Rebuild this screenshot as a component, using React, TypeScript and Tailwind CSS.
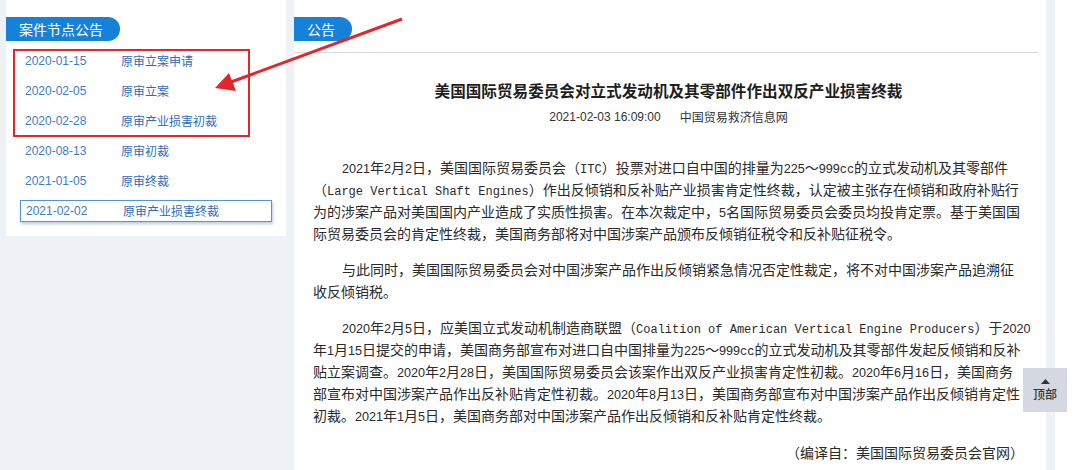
import React from "react";

// case timeline entries shown in the left sidebar
const nodes = [
  { date: "2020-01-15", title: "原审立案申请" },
  { date: "2020-02-05", title: "原审立案" },
  { date: "2020-02-28", title: "原审产业损害初裁" },
  { date: "2020-08-13", title: "原审初裁" },
  { date: "2021-01-05", title: "原审终裁" },
];

// body text, broken into the same lines as the original page
const paragraphs = [
  [
    "2021年2月2日，美国国际贸易委员会（ITC）投票对进口自中国的排量为225～999cc的立式发动机及其零部件",
    "（Large Vertical Shaft Engines）作出反倾销和反补贴产业损害肯定性终裁，认定被主张存在倾销和政府补贴行",
    "为的涉案产品对美国国内产业造成了实质性损害。在本次裁定中，5名国际贸易委员会委员均投肯定票。基于美国国",
    "际贸易委员会的肯定性终裁，美国商务部将对中国涉案产品颁布反倾销征税令和反补贴征税令。",
  ],
  [
    "与此同时，美国国际贸易委员会对中国涉案产品作出反倾销紧急情况否定性裁定，将不对中国涉案产品追溯征",
    "收反倾销税。",
  ],
  [
    "2020年2月5日，应美国立式发动机制造商联盟（Coalition of American Vertical Engine Producers）于2020",
    "年1月15日提交的申请，美国商务部宣布对进口自中国排量为225～999cc的立式发动机及其零部件发起反倾销和反补",
    "贴立案调查。2020年2月28日，美国国际贸易委员会该案作出双反产业损害肯定性初裁。2020年6月16日，美国商务",
    "部宣布对中国涉案产品作出反补贴肯定性初裁。2020年8月13日，美国商务部宣布对中国涉案产品作出反倾销肯定性",
    "初裁。2021年1月5日，美国商务部对中国涉案产品作出反倾销和反补贴肯定性终裁。",
  ],
];

// half-width runs get narrower latin fonts so the lines keep their widths
function Mixed({ text }: { text: string }) {
  return (
    <>
      {text.split(/([0-9]+|[A-Za-z ]+)/).map((p, i) => {
        if (!p) return null;
        if (/^[0-9]+$/.test(p))
          return (
            <span key={i} className="font-['Liberation_Sans',sans-serif] text-[12.6px] leading-none">
              {p}
            </span>
          );
        if (/^[A-Za-z ]+$/.test(p))
          return (
            <span key={i} className="font-['Liberation_Mono',monospace] text-[12px] leading-none">
              {p}
            </span>
          );
        return <span key={i}>{p}</span>;
      })}
    </>
  );
}

function Tab({ label, width }: { label: string; width: string }) {
  return (
    <div className={`${width} h-[24px] bg-[#1681d8] rounded-r-full text-white text-[14px] leading-[24px] pl-[13px]`}>
      {label}
    </div>
  );
}

export default function App() {
  return (
    <div className="relative w-[1080px] h-[470px] overflow-hidden bg-[#eef1f6] flex font-['Noto_Sans_CJK_SC',sans-serif]">
      {/* Sidebar */}
      <div className="ml-[6px] w-[280px] h-[236px] bg-white pt-[17px] shrink-0">
        <Tab label="案件节点公告" width="w-[114px]" />
        <div className="mt-[5px] text-[12px] text-[#2c6db8]">
          {nodes.map((n) => (
            <div key={n.date} className="h-[30px] flex items-center pl-[19px]">
              <span className="w-[96px] font-['Liberation_Sans',sans-serif] text-[#3d7dc0]">{n.date}</span>
              <span>{n.title}</span>
            </div>
          ))}
          <div className="h-[30px] py-[4px]">
            <div className="mx-[14px] h-[22px] border border-[#4b97d9] shadow-[1px_2px_3px_rgba(60,110,170,0.35)] flex items-center pl-[5px]">
              <span className="w-[97px] font-['Liberation_Sans',sans-serif] text-[#3d7dc0]">2021-02-02</span>
              <span>原审产业损害终裁</span>
            </div>
          </div>
        </div>
      </div>

      {/* Article */}
      <div className="ml-[8px] w-[752px] h-full bg-white shrink-0">
        <div className="h-[53px] pt-[17px] mr-[8px] border-b border-[#dadada]">
          <Tab label="公告" width="w-[58px]" />
        </div>
        <div className="pl-[19px] pr-[22px] text-[#2a2a2a]">
          <h1 className="mt-[25px] text-center text-[15.6px] leading-[24px] font-bold text-[#1e1e1e]">
            美国国际贸易委员会对立式发动机及其零部件作出双反产业损害终裁
          </h1>
          <div className="mt-[5px] flex justify-center gap-[19px] text-[12px] leading-[20px] text-[#333]">
            <span className="font-['Liberation_Sans',sans-serif]">2021-02-03 16:09:00</span>
            <span>中国贸易救济信息网</span>
          </div>
          <div className="mt-[29px] text-[14px] leading-[22px] text-[#2a2a2a]">
            {paragraphs.map((lines, pi) => (
              <div key={pi} className={pi === 0 ? "" : "mt-[14px]"}>
                {lines.map((line, li) => (
                  <div key={li} className={`h-[22px] whitespace-nowrap ${li === 0 ? "pl-[29px]" : ""}`}>
                    <Mixed text={line} />
                  </div>
                ))}
              </div>
            ))}
            <div className="mt-[15px] h-[22px] text-right">（编译自：美国国际贸易委员会官网）</div>
          </div>
        </div>
      </div>

      <div className="ml-[9px] flex-1 h-full bg-white" />

      {/* annotation: red box + arrow */}
      <div className="absolute left-[13px] top-[49px] w-[237px] h-[88px] border-2 border-[#e3262c]" />
      <svg className="absolute left-0 top-0 pointer-events-none" width="1080" height="470">
        <line x1="402" y1="19" x2="231" y2="82" stroke="#e3262c" strokeWidth="3" />
        <polygon points="215,88 229,73 236,91" fill="#e3262c" />
      </svg>

      {/* back to top */}
      <div className="absolute left-[1023px] top-[368px] w-[44px] h-[44px] bg-[#d4d8e0] flex flex-col items-center justify-center gap-[3px]">
        <svg width="9" height="5" viewBox="0 0 9 5">
          <polygon points="4.5,0 9,5 0,5" fill="#333" />
        </svg>
        <span className="text-[12px] leading-[14px] font-medium text-[#333]">顶部</span>
      </div>
    </div>
  );
}
